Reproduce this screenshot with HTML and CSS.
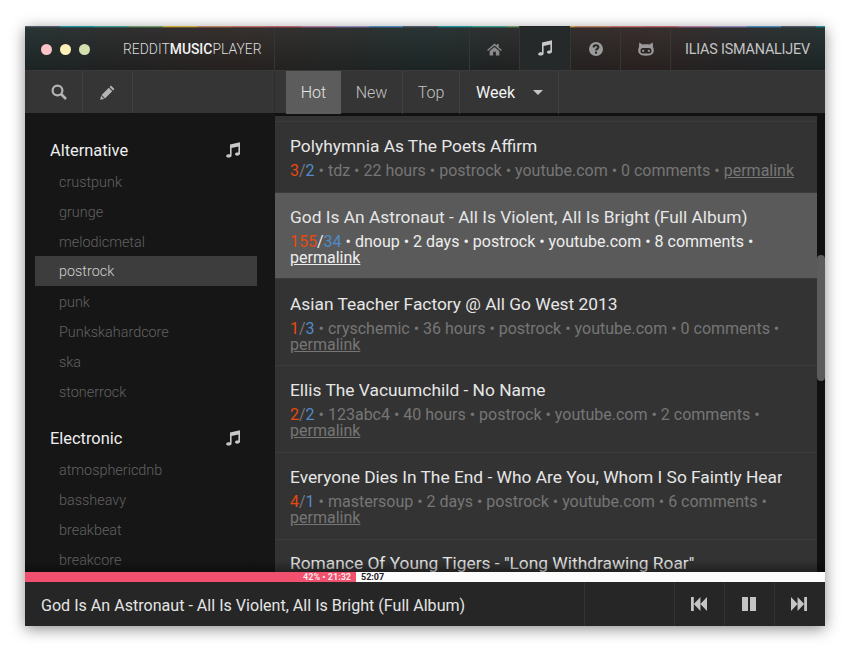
FILE: index.html
```html
<!DOCTYPE html>
<html lang="en">
<head>
  <meta charset="UTF-8">
  <title>Reddit Music Player</title>
  <link rel="stylesheet" href="styles.css">
</head>
<body>
  <div class="window">
    <div class="titlebar">
      <div class="lights">
        <span class="light red"></span>
        <span class="light yellow"></span>
        <span class="light green"></span>
      </div>
      <div class="brand"><span class="narrow">REDDIT<b>MUSIC</b>PLAYER</span></div>
      <div class="title-fill"></div>
      <a class="title-btn">
        <svg width="15" height="13" viewBox="0 0 16 14"><path fill="#8a8a8a" d="M8 0.5 L10.5 2.7 V1 H12.5 V4.5 L16 7.6 L15 8.6 L8 2.6 L1 8.6 L0 7.6 Z M2.8 8.7 L8 4.2 L13.2 8.7 V13.5 H9.5 V9.5 H6.5 V13.5 H2.8 Z"/></svg>
      </a>
      <a class="title-btn current">
        <svg width="16" height="16" viewBox="0 0 16 16"><path fill="#c8c8c8" d="M5 2.6 L15 0.2 V11.6 C15 13 13.6 13.7 12.2 13.7 C10.8 13.7 10 13 10 12.1 C10 11 11.2 10.4 12.3 10.4 C12.8 10.4 13.1 10.5 13.4 10.6 V4.4 L6.6 6 V13.4 C6.6 14.8 5.2 15.6 3.6 15.6 C2.2 15.6 1.2 14.9 1.2 13.9 C1.2 12.8 2.5 12.2 3.7 12.2 C4.2 12.2 4.6 12.3 5 12.4 Z"/></svg>
      </a>
      <a class="title-btn">
        <svg width="14" height="14" viewBox="0 0 14 14"><circle cx="7" cy="7" r="7" fill="#9a9a9a"/><path fill="none" stroke="#2a2727" stroke-width="2" d="M4.6 5.4 C4.6 3.9 5.8 3.2 7 3.2 C8.4 3.2 9.4 4 9.4 5.2 C9.4 6.8 7 6.9 7 8.6"/><rect x="6" y="9.6" width="2" height="2" fill="#2a2727"/></svg>
      </a>
      <a class="title-btn">
        <svg width="16" height="14" viewBox="0 0 16 14"><path fill="#9a9a9a" d="M1.2 0.5 L4.5 2.5 C6.2 2 9.8 2 11.5 2.5 L14.8 0.5 L15 5 C16 7 16 9 15.2 11 C14 13.2 11 13.7 8 13.7 C5 13.7 2 13.2 0.8 11 C0 9 0 7 1 5 Z"/><rect x="2.5" y="6" width="11" height="5.6" rx="2.6" fill="#2b2727"/><circle cx="5.2" cy="8.8" r="1.1" fill="#9a9a9a"/><circle cx="10.8" cy="8.8" r="1.1" fill="#9a9a9a"/></svg>
      </a>
      <div class="username"><span class="narrow user">ILIAS ISMANALIJEV</span></div>
    </div>

    <div class="toolbar">
      <div class="tool-left">
        <a class="tool-btn">
          <svg width="16" height="16" viewBox="0 0 16 16"><circle cx="6.5" cy="6.5" r="4.9" fill="none" stroke="#b4b4b4" stroke-width="2.2"/><path stroke="#b4b4b4" stroke-width="2.6" d="M10 10 L15 15"/></svg>
        </a>
        <a class="tool-btn">
          <svg width="15" height="15" viewBox="0 0 15 15"><path fill="#b4b4b4" d="M11 0.6 L14.4 4 L13 5.4 L9.6 2 Z M8.8 2.8 L12.2 6.2 L5 13.4 L1.6 10 Z M1 10.8 L4.2 14 L0.2 14.8 Z"/></svg>
        </a>
      </div>
      <div class="sorts">
        <a class="sort active">Hot</a>
        <a class="sort">New</a>
        <a class="sort">Top</a>
        <a class="sort period">Week <span class="caret"></span></a>
      </div>
    </div>

    <div class="main">
      <div class="sidebar">
        <div class="group-head">Alternative
          <svg width="16" height="16" viewBox="0 0 16 16"><path fill="#c8c8c8" d="M5 2.6 L15 0.2 V11.6 C15 13 13.6 13.7 12.2 13.7 C10.8 13.7 10 13 10 12.1 C10 11 11.2 10.4 12.3 10.4 C12.8 10.4 13.1 10.5 13.4 10.6 V4.4 L6.6 6 V13.4 C6.6 14.8 5.2 15.6 3.6 15.6 C2.2 15.6 1.2 14.9 1.2 13.9 C1.2 12.8 2.5 12.2 3.7 12.2 C4.2 12.2 4.6 12.3 5 12.4 Z"/></svg>
        </div>
        <div class="sub">crustpunk</div>
        <div class="sub">grunge</div>
        <div class="sub">melodicmetal</div>
        <div class="sub active">postrock</div>
        <div class="sub">punk</div>
        <div class="sub">Punkskahardcore</div>
        <div class="sub">ska</div>
        <div class="sub">stonerrock</div>
        <div class="group-head second">Electronic
          <svg width="16" height="16" viewBox="0 0 16 16"><path fill="#c8c8c8" d="M5 2.6 L15 0.2 V11.6 C15 13 13.6 13.7 12.2 13.7 C10.8 13.7 10 13 10 12.1 C10 11 11.2 10.4 12.3 10.4 C12.8 10.4 13.1 10.5 13.4 10.6 V4.4 L6.6 6 V13.4 C6.6 14.8 5.2 15.6 3.6 15.6 C2.2 15.6 1.2 14.9 1.2 13.9 C1.2 12.8 2.5 12.2 3.7 12.2 C4.2 12.2 4.6 12.3 5 12.4 Z"/></svg>
        </div>
        <div class="sub">atmosphericdnb</div>
        <div class="sub">bassheavy</div>
        <div class="sub">breakbeat</div>
        <div class="sub">breakcore</div>
      </div>

      <div class="songs-wrap">
        <div class="songs">
          <div class="song first">
            <div class="song-title">Polyhymnia As The Poets Affirm</div>
            <div class="song-meta"><span class="up">3</span>/<span class="down">2</span> • tdz • 22 hours • postrock • youtube.com • 0 comments • <a>permalink</a></div>
          </div>
          <div class="song active">
            <div class="song-title">God Is An Astronaut - All Is Violent, All Is Bright (Full Album)</div>
            <div class="song-meta"><span class="up">155</span>/<span class="down">34</span> • dnoup • 2 days • postrock • youtube.com • 8 comments • <a>permalink</a></div>
          </div>
          <div class="song third">
            <div class="song-title">Asian Teacher Factory @ All Go West 2013</div>
            <div class="song-meta"><span class="up">1</span>/<span class="down">3</span> • cryschemic • 36 hours • postrock • youtube.com • 0 comments • <a>permalink</a></div>
          </div>
          <div class="song">
            <div class="song-title">Ellis The Vacuumchild - No Name</div>
            <div class="song-meta"><span class="up">2</span>/<span class="down">2</span> • 123abc4 • 40 hours • postrock • youtube.com • 2 comments • <a>permalink</a></div>
          </div>
          <div class="song">
            <div class="song-title">Everyone Dies In The End - Who Are You, Whom I So Faintly Hear</div>
            <div class="song-meta"><span class="up">4</span>/<span class="down">1</span> • mastersoup • 2 days • postrock • youtube.com • 6 comments • <a>permalink</a></div>
          </div>
          <div class="song last">
            <div class="song-title">Romance Of Young Tigers - "Long Withdrawing Roar"</div>
          </div>
        </div>
        <div class="scrolltrack"><div class="scrollthumb"></div></div>
      </div>
    </div>

    <div class="progress">
      <div class="progress-done">42% • 21:32</div>
      <div class="progress-left">52:07</div>
    </div>

    <div class="player">
      <div class="now-playing">God Is An Astronaut - All Is Violent, All Is Bright (Full Album)</div>
      <div class="player-gap"></div>
      <a class="ctrl">
        <svg width="16" height="14" viewBox="0 0 17 14" preserveAspectRatio="none"><path fill="#c4c4c4" d="M0 0 H3 V14 H0 Z M3 7 L10 0 V14 Z M10 7 L17 0 V14 Z"/></svg>
      </a>
      <a class="ctrl">
        <svg width="14" height="14" viewBox="0 0 14 14"><path fill="#c4c4c4" d="M0 0 H6 V14 H0 Z M8 0 H14 V14 H8 Z"/></svg>
      </a>
      <a class="ctrl">
        <svg width="16" height="14" viewBox="0 0 17 14" preserveAspectRatio="none"><path fill="#c4c4c4" d="M17 0 H14 V14 H17 Z M14 7 L7 0 V14 Z M7 7 L0 0 V14 Z"/></svg>
      </a>
    </div>
  </div>
</body>
</html>
```

FILE: styles.css
```css
html, body {
  margin: 0;
  padding: 0;
  background-color: #fff;
  overflow: hidden;
}

body {
  font-family: Roboto, "Liberation Sans", sans-serif;
  width: 850px;
  height: 650px;
  padding: 26px 25px 24px;
  box-sizing: border-box;
}

.window {
  width: 800px;
  height: 600px;
  display: flex;
  flex-direction: column;
  background-color: #111;
  box-shadow: 0 3px 14px rgba(0, 0, 0, 0.45);
  overflow: hidden;
}

/* title bar */
.titlebar {
  height: 45px;
  flex: none;
  box-sizing: border-box;
  padding-top: 2px;
  display: flex;
  align-items: stretch;
  background:
    linear-gradient(transparent 1px, rgba(40, 40, 40, 0.6) 1px) top / 100% 2px no-repeat,
    repeating-linear-gradient(90deg,
      #4d5c68 0 35px, #1f8f9c 35px 69.4px, #3f9a8c 69.4px 103.7px, #6d9a68 103.7px 138px,
      #c9a53a 138px 172.4px, #c0805f 172.4px 206.7px, #bd6e66 206.7px 241px, #b8666e 241px 275.5px,
      #b07a9e 275.5px 309.8px, #8f88ba 309.8px 344px, #4a8abb 344px 378px) top / 100% 2px no-repeat,
    linear-gradient(rgba(255, 255, 255, 0.03), rgba(0, 0, 0, 0.22)),
    linear-gradient(90deg, #232e2e 0, #2a2a2a 12%, #302a28 27%, #232e2e 50%, #2a2a2a 62%, #332927 77%, #2a2b2c 90%, #232e2e 100%);
  border-bottom: 1px solid #3a3a3a;
}

.lights {
  display: flex;
  align-items: center;
  gap: 8px;
  padding-left: 16px;
  width: 82px;
  box-sizing: border-box;
}

.light {
  width: 11px;
  height: 11px;
  border-radius: 50%;
}
.light.red { background-color: #fbc3c7; }
.light.yellow { background-color: #fdf0b9; }
.light.green { background-color: #d2e0b0; }

.brand {
  width: 168px;
  flex: none;
  padding-left: 16px;
  box-sizing: border-box;
  border-right: 1px solid #363636;
  color: #ddd;
  font-size: 15.5px;
  font-weight: 300;
  line-height: 43px;
  white-space: nowrap;
}
.brand b {
  font-weight: 500;
  color: #f2f2f2;
}

/* the original face is a condensed one */
.narrow {
  display: inline-block;
  transform: scaleX(0.896);
  transform-origin: left center;
}
.narrow.user {
  transform: scaleX(0.926);
}

.title-fill {
  flex: 1;
}

.title-btn {
  width: 50px;
  flex: none;
  display: flex;
  align-items: center;
  justify-content: center;
  box-sizing: border-box;
  border-left: 1px solid #363636;
}
.title-btn.current {
  width: 51px;
  margin-top: -2px;
  background-color: #25292a;
}

.username {
  width: 155px;
  flex: none;
  box-sizing: border-box;
  border-left: 1px solid #363636;
  padding-left: 14px;
  color: #c4c4c4;
  font-size: 15.5px;
  letter-spacing: -0.2px;
  line-height: 43px;
  white-space: nowrap;
}

/* second bar */
.toolbar {
  height: 42px;
  flex: none;
  display: flex;
  background-color: #353535;
}

.tool-left {
  width: 250px;
  flex: none;
  display: flex;
  padding-left: 10px;
  box-sizing: border-box;
  border-right: 1px solid #2c2c2c;
}

.tool-btn {
  width: 47px;
  display: flex;
  align-items: center;
  justify-content: center;
  border-right: 1px solid #404040;
}
.tool-btn + .tool-btn {
  width: 49px;
}

.sorts {
  display: flex;
  padding-left: 11px;
}

.sort {
  display: flex;
  align-items: center;
  justify-content: center;
  height: 43px;
  box-sizing: border-box;
  color: #c2c2c2;
  font-size: 16px;
  font-weight: 300;
  border-right: 1px solid #414141;
}
.sort:nth-child(1) { width: 55px; }
.sort:nth-child(2) { width: 62px; }
.sort:nth-child(3) { width: 57px; }
.sort.active {
  background-color: #5c5c5c;
  color: #e6e6e6;
  border-right: none;
}
.sort.period {
  width: 99px;
  justify-content: flex-start;
  padding-left: 16px;
  gap: 18px;
  color: #f2f2f2;
  font-weight: 400;
}

.caret {
  width: 0;
  height: 0;
  border-left: 5px solid transparent;
  border-right: 5px solid transparent;
  border-top: 5px solid #c4c4c4;
}

/* main */
.main {
  height: 459px;
  flex: none;
  display: flex;
  overflow: hidden;
  position: relative;
}
.main::after {
  content: "";
  position: absolute;
  left: 0;
  right: 0;
  bottom: 0;
  height: 12px;
  background: linear-gradient(rgba(0, 0, 0, 0), rgba(0, 0, 0, 0.35));
}

.sidebar {
  width: 250px;
  flex: none;
  padding: 20px 18px 0 10px;
  box-sizing: border-box;
  background-color: #161616;
  overflow: hidden;
}

.group-head {
  height: 33px;
  box-sizing: border-box;
  padding: 2px 16px 0 15px;
  display: flex;
  align-items: center;
  justify-content: space-between;
  color: #eee;
  font-size: 16.4px;
}
.group-head svg {
  margin-top: -2px;
}
.group-head.second {
  margin-top: 15px;
}

.sub {
  height: 30px;
  line-height: 33px;
  padding-left: 24px;
  color: #626262;
  font-size: 14.4px;
  font-weight: 300;
}
.sub.active {
  line-height: 32px;
  background-color: #3d3d3d;
  color: #d0d0d0;
}

.songs-wrap {
  flex: 1;
  display: flex;
  min-width: 0;
  padding-top: 3px;
}

.songs {
  flex: 1;
  min-width: 0;
  overflow: hidden;
  background-color: #333;
}

.song {
  padding: 12px 35px 0 15px;
  box-sizing: border-box;
  height: 87px;
  border-top: 1px solid #3b3b3b;
}
.song.first {
  height: 71px;
  margin-top: 5px;
}
.song.active {
  height: 86px;
  background-color: #5a5a5a;
}
.song.third {
  padding-top: 13px;
}
.song.last {
  padding-top: 11px;
}

.song-title {
  color: #e6e6e6;
  font-size: 17.35px;
  line-height: 24px;
  white-space: nowrap;
  overflow: hidden;
}

.song-meta {
  margin-right: -15px;
  color: #767676;
  font-size: 16px;
  line-height: 16px;
  padding-top: 5px;
}
.song-meta a {
  text-decoration: underline;
}
.song.active .song-meta {
  color: #eee;
}

.up { color: #e8490f; }
.down { color: #4f8cc9; }

.scrolltrack {
  width: 8px;
  flex: none;
  background-color: #111;
  position: relative;
}

.scrollthumb {
  position: absolute;
  top: 139px;
  left: 0;
  width: 8px;
  height: 126px;
  border-radius: 4px;
  background-color: #5c5c5c;
}

/* progress */
.progress {
  height: 10px;
  flex: none;
  display: flex;
  background-color: #fcfcfc;
  font-size: 9px;
  font-weight: 700;
  line-height: 11px;
}

.progress-done {
  width: 331px;
  box-sizing: border-box;
  padding-right: 5px;
  text-align: right;
  background-color: #f2506f;
  color: #fbe4e8;
}

.progress-left {
  padding-left: 5px;
  color: #222;
}

/* player */
.player {
  height: 44px;
  flex: none;
  display: flex;
  align-items: stretch;
  padding-right: 1px;
  background-color: #262626;
}

.now-playing {
  width: 560px;
  flex: none;
  padding-left: 16px;
  box-sizing: border-box;
  color: #e4e4e4;
  font-size: 16.08px;
  line-height: 47px;
  white-space: nowrap;
  border-right: 1px solid #333;
}

.player-gap {
  flex: 1;
}

.ctrl {
  width: 50px;
  flex: none;
  box-sizing: border-box;
  padding-right: 1px;
  display: flex;
  align-items: center;
  justify-content: center;
  border-left: 1px solid #333;
}
```
